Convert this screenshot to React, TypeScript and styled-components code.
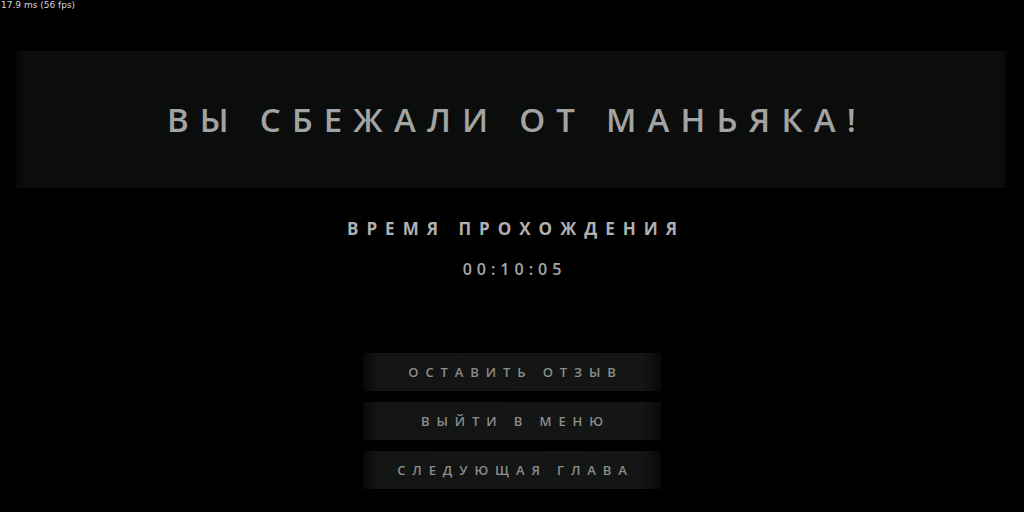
import React from "react";
import styled, { createGlobalStyle } from "styled-components";

const GlobalStyle = createGlobalStyle`
  html, body {
    margin: 0;
    padding: 0;
    background: #000;
    overflow: hidden;
  }
  #root {
    width: 1024px;
    height: 512px;
  }
`;

const Screen = styled.div`
  position: relative;
  width: 1024px;
  height: 512px;
  background: #000;
  display: flex;
  flex-direction: column;
  align-items: center;
  font-family: "Open Sans", "DejaVu Sans", sans-serif;
`;

const Stats = styled.div`
  position: absolute;
  top: 0;
  left: 1px;
  font-family: "DejaVu Sans", sans-serif;
  font-size: 9px;
  line-height: 11px;
  color: #d8d8d8;
`;

const Banner = styled.div`
  margin-top: 51px;
  width: 991px;
  height: 137px;
  margin-left: -1px;
  display: flex;
  align-items: center;
  justify-content: center;
  background: linear-gradient(
    90deg,
    #050706 0px,
    #0a0d0b 8px,
    #0a0d0b calc(100% - 8px),
    #050706 100%
  );
`;

const Title = styled.h1`
  margin: 0;
  font-size: 33px;
  font-weight: 600;
  letter-spacing: 11.2px;
  padding-left: 11px;
  color: #a2a3a2;
`;

const Label = styled.div`
  margin-top: 29px;
  font-size: 17px;
  font-weight: 700;
  letter-spacing: 8px;
  padding-left: 8px;
  color: #b0b0b0;
`;

const Time = styled.div`
  margin-top: 18px;
  font-size: 16px;
  font-weight: 600;
  letter-spacing: 5px;
  padding-left: 5px;
  color: #a8a8a8;
`;

const Menu = styled.div`
  margin-top: 73px;
  display: flex;
  flex-direction: column;
  gap: 11px;
`;

const MenuButton = styled.button`
  width: 298px;
  height: 38px;
  border: 0;
  padding: 0 0 0 7px;
  cursor: pointer;
  font-family: "Open Sans", "DejaVu Sans", sans-serif;
  font-size: 13px;
  font-weight: 600;
  letter-spacing: 6.9px;
  color: #8c8c8c;
  background: linear-gradient(
    90deg,
    #080808 0px,
    #131414 14px,
    #141615 calc(100% - 20px),
    #090909 100%
  );
`;

const items = ["ОСТАВИТЬ ОТЗЫВ", "ВЫЙТИ В МЕНЮ", "СЛЕДУЮЩАЯ ГЛАВА"];

const App = () => {
  return (
    <>
      <GlobalStyle />
      <Screen>
        <Stats>17.9 ms (56 fps)</Stats>
        <Banner>
          <Title>ВЫ СБЕЖАЛИ ОТ МАНЬЯКА!</Title>
        </Banner>
        <Label>ВРЕМЯ ПРОХОЖДЕНИЯ</Label>
        <Time>00:10:05</Time>
        <Menu>
          {items.map((item) => (
            <MenuButton key={item}>{item}</MenuButton>
          ))}
        </Menu>
      </Screen>
    </>
  );
};

export default App;
